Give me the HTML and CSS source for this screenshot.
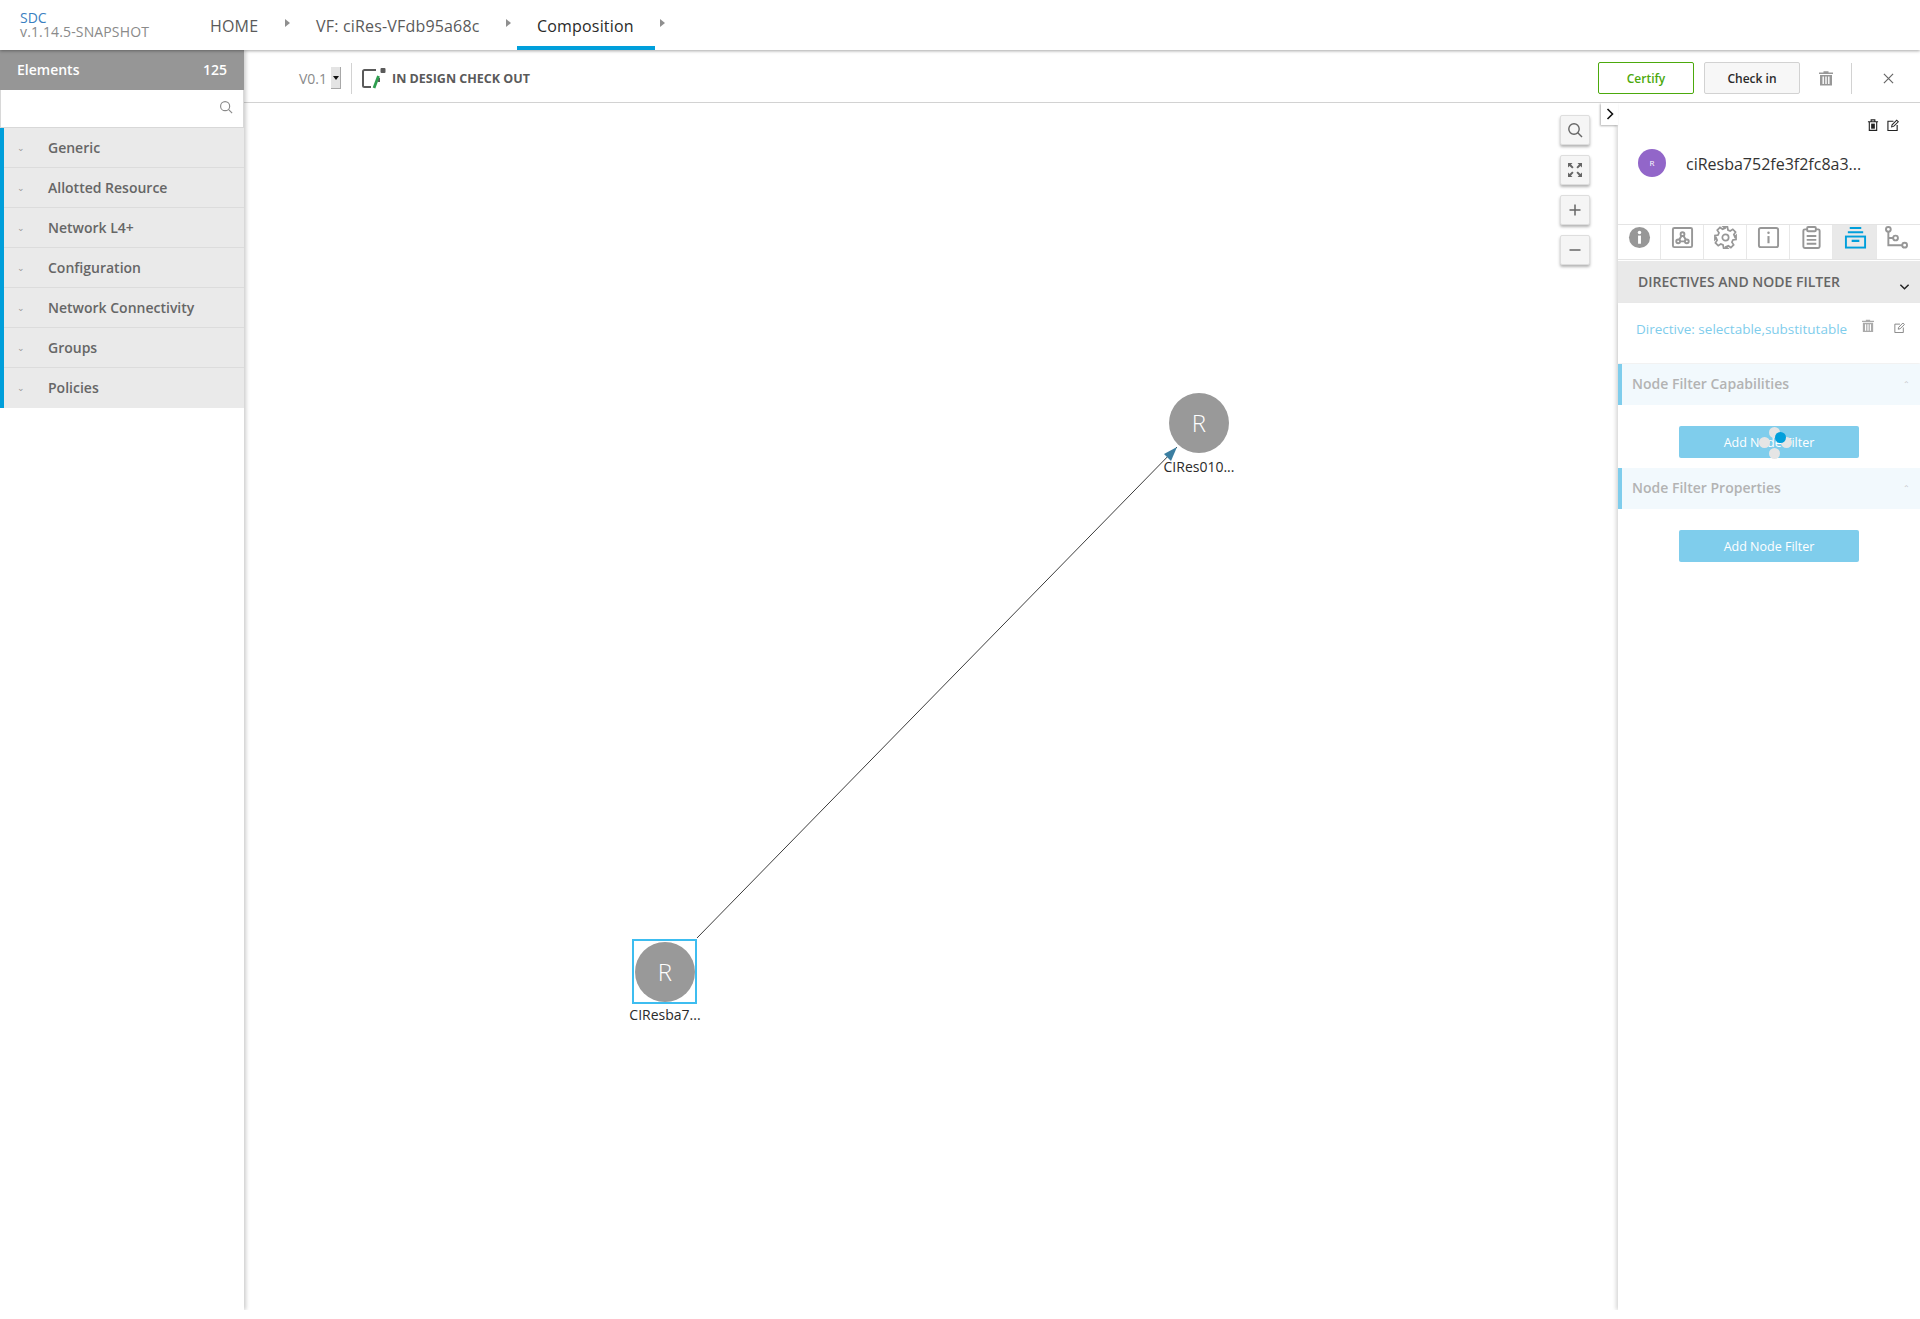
FILE: index.html
```html
<!DOCTYPE html>
<html lang="en">
<head>
  <meta charset="UTF-8">
  <title>SDC Composition</title>
  <link rel="stylesheet" href="styles.css">
</head>
<body>
  <!-- top navigation -->
  <header class="topnav">
    <div class="brand">
      <div class="brand-name">SDC</div>
      <div class="brand-version">v.1.14.5-SNAPSHOT</div>
    </div>
    <nav class="crumbs">
      <a class="crumb crumb-home">HOME</a>
      <span class="crumb-arrow"></span>
      <a class="crumb crumb-vf">VF: ciRes-VFdb95a68c</a>
      <span class="crumb-arrow"></span>
      <a class="crumb crumb-active">Composition</a>
      <span class="crumb-arrow"></span>
    </nav>
  </header>

  <div class="main">
    <!-- palette -->
    <aside class="palette">
      <div class="palette-head"><span>Elements</span><span>125</span></div>
      <div class="palette-search">
        <svg class="icon-search" viewBox="0 0 16 16"><circle cx="7" cy="7" r="5.2"/><path d="M10.8 10.8 15 15"/></svg>
      </div>
      <ul class="palette-list">
        <li class="palette-row"><span class="row-dash">&#8964;</span>Generic</li>
        <li class="palette-row"><span class="row-dash">&#8964;</span>Allotted Resource</li>
        <li class="palette-row"><span class="row-dash">&#8964;</span>Network L4+</li>
        <li class="palette-row"><span class="row-dash">&#8964;</span>Configuration</li>
        <li class="palette-row"><span class="row-dash">&#8964;</span>Network Connectivity</li>
        <li class="palette-row"><span class="row-dash">&#8964;</span>Groups</li>
        <li class="palette-row"><span class="row-dash">&#8964;</span>Policies</li>
      </ul>
    </aside>

    <div class="workspace">
      <!-- version and lifecycle bar -->
      <div class="toolbar">
        <span class="version">V0.1</span>
        <span class="version-select"><i></i></span>
        <span class="toolbar-sep"></span>
        <svg class="state-icon" viewBox="0 0 24 22">
          <path d="M14 3H2.500A1.500 1.500 0 0 0 1 4.500v14A1.500 1.500 0 0 0 2.500 20H9" fill="none" stroke="#5a5a5a" stroke-width="2"/>
          <path d="M17 11v4" fill="none" stroke="#5a5a5a" stroke-width="2"/>
          <path d="M12 21 16.500 9" fill="none" stroke="#2e9e4f" stroke-width="2.800"/>
          <rect x="18.500" y="1" width="5" height="5" rx="1" fill="#5a5a5a"/>
        </svg>
        <span class="state-text">IN DESIGN CHECK OUT</span>
        <div class="toolbar-actions">
          <button class="btn btn-certify">Certify</button>
          <button class="btn btn-checkin">Check in</button>
          <svg class="icon-trash trash-top" viewBox="0 0 14 15"><path d="M4.500 2V.8h5V2H14v1.400H0V2zM1 4.400h12V15H1zM3.500 6v7.500h1.400V6zM6.300 6v7.500h1.400V6zM9.100 6v7.500h1.400V6z" fill-rule="evenodd"/></svg>
          <span class="toolbar-sep sep-right"></span>
          <svg class="icon-close" viewBox="0 0 12 12"><path d="M1 1l10 10M11 1 1 11"/></svg>
        </div>
      </div>

      <div class="stage">
        <!-- free canvas -->
        <div class="canvas">
          <svg class="edges" width="1374" height="1207">
            <path d="M453 835 933 344" stroke="#3c3c3c" stroke-width="1" fill="none"/>
            <path d="M933 344 920 351 927 358z" fill="#3b7ea1"/>
          </svg>

          <div class="node node-source">
            <div class="node-circle">R</div>
            <div class="node-label">CIResba7...</div>
          </div>
          <div class="node node-target">
            <div class="node-circle">R</div>
            <div class="node-label">CIRes010...</div>
          </div>

          <div class="zoom-tools">
            <button class="zoom-btn"><svg viewBox="0 0 16 16"><circle cx="7" cy="7" r="5.200" fill="none" stroke="#666" stroke-width="1.400"/><path d="M10.800 10.800 15 15" stroke="#666" stroke-width="1.400"/></svg></button>
            <button class="zoom-btn"><svg viewBox="0 0 16 16"><path d="M1 1h4.500L4 2.600 6.600 5.200 5.200 6.600 2.600 4 1 5.500zM15 1v4.500L13.400 4 10.800 6.600 9.400 5.200 12 2.600 10.500 1zM1 15v-4.500L2.600 12l2.600-2.600 1.400 1.400L4 13.400 5.500 15zM15 15h-4.500l1.500-1.600-2.600-2.600 1.400-1.400 2.600 2.600 1.600-1.500z" fill="#666"/></svg></button>
            <button class="zoom-btn"><svg viewBox="0 0 16 16"><path d="M8 2.500v11M2.500 8h11" stroke="#666" stroke-width="1.500"/></svg></button>
            <button class="zoom-btn"><svg viewBox="0 0 16 16"><path d="M2.500 8h11" stroke="#666" stroke-width="1.500"/></svg></button>
          </div>
        </div>

        <!-- details panel -->
        <section class="panel">
          <button class="panel-toggle"><svg viewBox="0 0 8 12"><path d="M1.500 1 6.500 6l-5 5" fill="none" stroke="#111" stroke-width="1.600"/></svg></button>
          <div class="panel-actions">
            <svg viewBox="0 0 12 13"><path d="M.5 3h11M4 3V1h4V3M2 3v9.300h8V3" fill="none" stroke="#222" stroke-width="1.200"/><rect x="4" y="5" width="4" height="5.500" fill="#222"/></svg>
            <svg viewBox="0 0 13 13"><path d="M7 2.500H1v10h10V6.500" fill="none" stroke="#222" stroke-width="1.200"/><path d="M5 8.500l.5-2.200L10.500 1.200l1.800 1.800L7.200 8z" fill="none" stroke="#222" stroke-width="1.100"/></svg>
          </div>
          <div class="panel-title">
            <div class="panel-avatar">R</div>
            <div class="panel-name">ciResba752fe3f2fc8a3...</div>
          </div>

          <div class="tabs">
            <div class="tab"><svg viewBox="0 0 24 24"><circle cx="12" cy="12" r="11" fill="#979797"/><rect x="10.500" y="10" width="3" height="8.500" fill="#fff"/><circle cx="12" cy="6.800" r="1.800" fill="#fff"/></svg></div>
            <div class="tab"><svg viewBox="0 0 24 24" fill="none" stroke="#979797" stroke-width="2"><rect x="2" y="2" width="20" height="20" rx="1.500"/><circle cx="12" cy="8.500" r="2"/><circle cx="7.500" cy="16" r="2"/><circle cx="16.500" cy="16" r="2"/><path d="M11 10.300 8.500 14.300M13 10.300l2.500 4M9.500 16h5"/></svg></div>
            <div class="tab"><svg viewBox="0 0 24 24" fill="none" stroke="#979797" stroke-width="1.800"><circle cx="12" cy="12" r="3.300"/><path d="M10 1h4l.6 3.200 2.300 1 2.700-1.800 2.900 2.900-1.800 2.700 1 2.300L23 10v4l-3.300.6-1 2.300 1.800 2.700-2.900 2.900-2.700-1.800-2.300 1L14 23h-4l-.6-3.300-2.300-1-2.700 1.800-2.900-2.900 1.800-2.700-1-2.300L1 14v-4l3.200-.6 1-2.300-1.800-2.700 2.900-2.900 2.700 1.800 2.300-1z"/></svg></div>
            <div class="tab"><svg viewBox="0 0 24 24" fill="none" stroke="#979797" stroke-width="2"><rect x="2" y="2" width="20" height="20" rx="2"/><path d="M12 10.500V18" stroke-width="2.200"/><circle cx="12" cy="7" r="1.300" fill="#979797" stroke="none"/></svg></div>
            <div class="tab"><svg viewBox="0 0 24 24" fill="none" stroke="#979797" stroke-width="2"><path d="M7.500 3.500H5A1.500 1.500 0 0 0 3.500 5v16.500A1.500 1.500 0 0 0 5 23h14a1.500 1.500 0 0 0 1.500-1.500V5A1.500 1.500 0 0 0 19 3.500h-2.500"/><rect x="7.500" y="1" width="9" height="4.500" rx="1"/><path d="M7 10.500h10M7 14.500h10M7 18.500h10"/></svg></div>
            <div class="tab tab-active"><svg viewBox="0 0 24 24" fill="none" stroke="#009fdb" stroke-width="2"><path d="M6 2h12M4 6.500h16"/><rect x="2" y="11" width="20" height="11.500"/><path d="M8 15.500h8" stroke-width="2.400"/></svg></div>
            <div class="tab tab-last"><svg viewBox="0 0 24 24" fill="none" stroke="#979797" stroke-width="2"><circle cx="3.500" cy="3.500" r="2.500"/><circle cx="11" cy="12.500" r="2.500"/><circle cx="20.500" cy="20" r="2.500"/><path d="M3.500 6v14H18M3.500 12.500h5"/></svg></div>
          </div>

          <div class="section-head">
            <span>DIRECTIVES AND NODE FILTER</span>
            <svg viewBox="0 0 12 8"><path d="M1.500 1.500 6 6l4.500-4.500" fill="none" stroke="#222" stroke-width="1.600"/></svg>
          </div>

          <div class="directive">
            <span class="directive-text">Directive: selectable,substitutable</span>
            <svg class="icon-trash trash-small" viewBox="0 0 14 15"><path d="M4.500 2V.8h5V2H14v1.400H0V2zM1 4.400h12V15H1zM3.500 6v7.500h1.400V6zM6.300 6v7.500h1.400V6zM9.100 6v7.500h1.400V6z" fill-rule="evenodd"/></svg>
            <svg class="icon-edit" viewBox="0 0 13 13"><path d="M7 2.500H1v10h10V6.500" fill="none" stroke="#808080" stroke-width="1.100"/><path d="M5 8.500l.5-2.200L10.500 1.200l1.800 1.800L7.200 8z" fill="none" stroke="#808080" stroke-width="1.100"/></svg>
          </div>

          <div class="filter-head"><span>Node Filter Capabilities</span><span class="filter-caret">&#8963;</span></div>
          <div class="filter-body">
            <button class="add-btn">Add Node Filter</button>
            <div class="spinner"><i class="dot dot-t"></i><i class="dot dot-l"></i><i class="dot dot-r"></i><i class="dot dot-b"></i><i class="dot dot-on"></i></div>
          </div>
          <div class="filter-head"><span>Node Filter Properties</span><span class="filter-caret">&#8963;</span></div>
          <div class="filter-body">
            <button class="add-btn">Add Node Filter</button>
          </div>
        </section>
      </div>
    </div>
  </div>
</body>
</html>
```

FILE: styles.css
```css
* {
  box-sizing: border-box;
}
html, body {
  height: 100%;
}
body {
  margin: 0;
  background: #fff;
  color: #5a5a5a;
  font-family: "Open Sans", "Liberation Sans", sans-serif;
  font-size: 14px;
  overflow: hidden;
}
button {
  font-family: inherit;
}

/* top nav */
.topnav {
  height: 50px;
  display: flex;
  background: #fff;
  box-shadow: 0 1px 3px rgba(0, 0, 0, 0.35);
  position: relative;
  z-index: 3;
}
.brand {
  width: 210px;
  padding: 11px 0 0 20px;
  font-size: 14px;
  line-height: 14px;
}
.brand-name {
  color: #3a7fc1;
}
.brand-version {
  color: #8a8a8a;
  letter-spacing: 0.14px;
}
.crumbs {
  display: flex;
  align-items: flex-start;
  font-size: 16px;
  letter-spacing: 0.18px;
}
.crumb {
  height: 50px;
  line-height: 52px;
  color: #5a5a5a;
}
.crumb-home {
  width: 75px;
}
.crumb-vf {
  width: 190px;
}
.crumb-active {
  width: 138px;
  padding-left: 20px;
  margin-left: 6px;
  color: #2a2a2a;
  border-bottom: 4px solid #009fdb;
}
.crumb-arrow {
  width: 0;
  height: 0;
  margin-top: 19px;
  border-left: 5px solid #8f8f8f;
  border-top: 4.5px solid transparent;
  border-bottom: 4.5px solid transparent;
}
.crumb-arrow:nth-child(2) {
  margin-right: 26px;
}
.crumb-arrow:nth-child(6) {
  margin-left: 5px;
}

.main {
  display: flex;
  height: 1260px;
}

/* palette */
.palette {
  width: 244px;
  flex: none;
  background: #fff;
  box-shadow: 2px 0 4px rgba(0, 0, 0, 0.2);
  clip-path: inset(0 -8px 0 0);
  position: relative;
  z-index: 2;
}
.palette-head {
  height: 40px;
  padding: 0 17px 2px;
  display: flex;
  justify-content: space-between;
  align-items: center;
  background: #969696;
  color: #fff;
  font-weight: 600;
}
.palette-search {
  height: 38px;
  border: 1px solid #d8d8d8;
  border-top: none;
  padding: 0 10px 3px 0;
  display: flex;
  justify-content: flex-end;
  align-items: center;
}
.icon-search {
  width: 14px;
  height: 14px;
  fill: none;
  stroke: #8a8a8a;
  stroke-width: 1.300;
}
.palette-list {
  list-style: none;
  margin: 0;
  padding: 0;
  border-left: 4px solid #009fdb;
}
.palette-row {
  height: 40px;
  display: flex;
  align-items: center;
  background: #eaeaea;
  border-bottom: 1px solid #dcdcdc;
  color: #666;
  font-size: 14px;
  font-weight: 600;
}
.palette-row:last-child {
  border-bottom-color: #eaeaea;
}
.row-dash {
  width: 44px;
  padding-left: 13px;
  font-size: 9px;
  font-weight: 400;
  color: #9a9a9a;
}

/* toolbar */
.workspace {
  flex: 1;
  display: flex;
  flex-direction: column;
  min-width: 0;
}
.toolbar {
  height: 53px;
  flex: none;
  display: flex;
  align-items: center;
  padding: 4px 0 0 55px;
  border-bottom: 1px solid #d2d2d2;
}
.version {
  color: #8a8a8a;
  width: 28px;
  margin-top: 1px;
}
.version-select {
  width: 10px;
  height: 22px;
  margin-left: 4px;
  background: #e4e4e4;
  border-right: 1px solid #a8a8a8;
  border-bottom: 1px solid #a8a8a8;
  display: flex;
  align-items: center;
  justify-content: center;
}
.version-select i {
  border-top: 4px solid #111;
  border-left: 3px solid transparent;
  border-right: 3px solid transparent;
}
.toolbar-sep {
  width: 1px;
  height: 31px;
  background: #d2d2d2;
  margin: 0 10px;
}
.state-icon {
  width: 24px;
  height: 22px;
  margin-right: 6px;
}
.state-text {
  font-size: 12.500px;
  font-weight: 700;
  color: #5a5a5a;
}
.toolbar-actions {
  margin-left: auto;
  display: flex;
  align-items: center;
}
.btn {
  width: 96px;
  height: 32px;
  border-radius: 2px;
  font-size: 12px;
  font-weight: 600;
  padding: 0;
}
.btn-certify {
  background: #fff;
  border: 1px solid #4ca90c;
  color: #4ca90c;
  margin-right: 10px;
}
.btn-checkin {
  background: #f7f7f7;
  border: 1px solid #d2d2d2;
  color: #2a2a2a;
}
.icon-trash {
  fill: #979797;
}
.trash-top {
  width: 14px;
  height: 16px;
  margin-left: 19px;
}
.sep-right {
  margin: 0 0 0 18px;
}
.icon-close {
  width: 11px;
  height: 11px;
  margin: 0 26px 0 31px;
  stroke: #666;
  stroke-width: 1.300;
}

/* canvas */
.stage {
  flex: 1;
  display: flex;
  min-height: 0;
}
.canvas {
  flex: 1;
  position: relative;
}
.edges {
  position: absolute;
  left: 0;
  top: 0;
}
.node {
  position: absolute;
  width: 80px;
  text-align: center;
}
.node-source {
  left: 381px;
  top: 839px;
}
.node-source::before {
  content: "";
  position: absolute;
  left: 7px;
  top: -3px;
  width: 65px;
  height: 65px;
  box-sizing: border-box;
  border: 2px solid #3dbdf0;
}
.node-source .node-label {
  margin-top: 3px;
}
.node-target {
  left: 915px;
  top: 290px;
}
.node-circle {
  width: 60px;
  height: 60px;
  margin: 0 auto;
  border-radius: 50%;
  background: #999;
  color: #fff;
  font-size: 24px;
  font-weight: 300;
  line-height: 60px;
}
.node-label {
  margin-top: 4px;
  color: #2a2a2a;
  font-size: 14px;
  line-height: 19px;
}
.zoom-tools {
  position: absolute;
  right: 28px;
  top: 12px;
  display: flex;
  flex-direction: column;
  gap: 10px;
}
.zoom-btn {
  width: 30px;
  height: 30px;
  padding: 0;
  background: #f5f5f5;
  border: 1px solid #dedede;
  border-radius: 2px;
  box-shadow: 0 2px 3px rgba(0, 0, 0, 0.3);
  display: flex;
  align-items: center;
  justify-content: center;
}
.zoom-btn svg {
  width: 16px;
  height: 16px;
}

/* details panel */
.panel {
  width: 302px;
  flex: none;
  position: relative;
  background: #fff;
  box-shadow: -2px 0 4px rgba(0, 0, 0, 0.16);
  clip-path: inset(0 0 0 -30px);
}
.panel-toggle {
  position: absolute;
  left: -17px;
  top: 0;
  width: 17px;
  height: 22px;
  padding: 0;
  background: #fff;
  border: none;
  box-shadow: -1px 1px 2px rgba(0, 0, 0, 0.3);
  display: flex;
  align-items: center;
  justify-content: center;
}
.panel-toggle svg {
  width: 8px;
  height: 12px;
}
.panel-actions {
  height: 41px;
  padding: 16px 21px 0 0;
  display: flex;
  justify-content: flex-end;
  gap: 8px;
}
.panel-actions svg {
  width: 12px;
  height: 12px;
}
.panel-title {
  height: 80px;
  display: flex;
  align-items: flex-start;
  padding: 5px 0 0 20px;
}
.panel-avatar {
  width: 28px;
  height: 28px;
  border-radius: 50%;
  background: #9266c9;
  color: #fff;
  font-size: 8px;
  line-height: 28px;
  text-align: center;
}
.panel-name {
  margin-left: 20px;
  font-size: 16px;
  line-height: 30px;
  color: #333;
}
.tabs {
  height: 36px;
  display: flex;
  border-top: 1px solid #e4e4e4;
  border-bottom: 1px solid #e4e4e4;
}
.tab {
  width: 43px;
  border-right: 1px solid #e8e8e8;
  display: flex;
  justify-content: center;
  padding-top: 1px;
}
.tab svg {
  width: 23px;
  height: 23px;
}
.tab-active {
  width: 44px;
  padding-left: 1px;
  background: #e9e9e9;
}
.tab-last {
  width: 42px;
  padding-right: 4px;
  border-right: none;
}
.section-head {
  height: 42px;
  margin-top: 1px;
  background: #e9e9e9;
  display: flex;
  align-items: center;
  padding: 0 10px 1px 20px;
  color: #666;
  font-size: 14px;
  font-weight: 600;
}
.section-head svg {
  width: 11px;
  height: 8px;
  margin: 11px 0 0 auto;
}
.directive {
  height: 60px;
  margin-bottom: 1px;
  display: flex;
  align-items: flex-start;
  padding: 15px 0 0 18px;
  box-shadow: 0 1px 2px rgba(0, 0, 0, 0.08);
}
.directive-text {
  margin-top: 1px;
  color: #7fcdec;
  font-size: 13.500px;
  line-height: 20px;
  width: 226px;
  white-space: nowrap;
}
.trash-small {
  width: 12px;
  height: 15px;
  fill: #aaa;
}
.icon-edit {
  width: 11px;
  height: 11px;
  margin: 4px 0 0 20px;
}
.filter-head {
  height: 41px;
  display: flex;
  align-items: center;
  justify-content: space-between;
  background: #f2f9fd;
  border-left: 4px solid #7fcdec;
  padding: 0 10px 2px 10px;
  color: #b3b3b3;
  font-size: 14px;
  font-weight: 600;
}
.filter-caret {
  font-size: 8px;
  font-weight: 400;
  color: #c8c8c8;
}
.filter-body {
  height: 63px;
  padding-top: 21px;
  text-align: center;
  position: relative;
}
.add-btn {
  display: block;
  width: 180px;
  height: 32px;
  margin-left: 61px;
  background: #7fcdec;
  border: none;
  border-radius: 2px;
  color: #fff;
  font-size: 12.500px;
  font-weight: 500;
  padding: 0;
}

/* loading dots over the first button */
.spinner {
  position: absolute;
  left: 141px;
  top: 22px;
  width: 33px;
  height: 32px;
}
.dot {
  position: absolute;
  width: 11px;
  height: 11px;
  border-radius: 50%;
  background: #e5e5e5;
}
.dot-t { left: 10px; top: 0; }
.dot-l { left: 0; top: 10px; }
.dot-r { left: 22px; top: 10px; }
.dot-b { left: 10px; top: 21px; }
.dot-on {
  left: 16px;
  top: 5px;
  background: #009fdb;
}
```
